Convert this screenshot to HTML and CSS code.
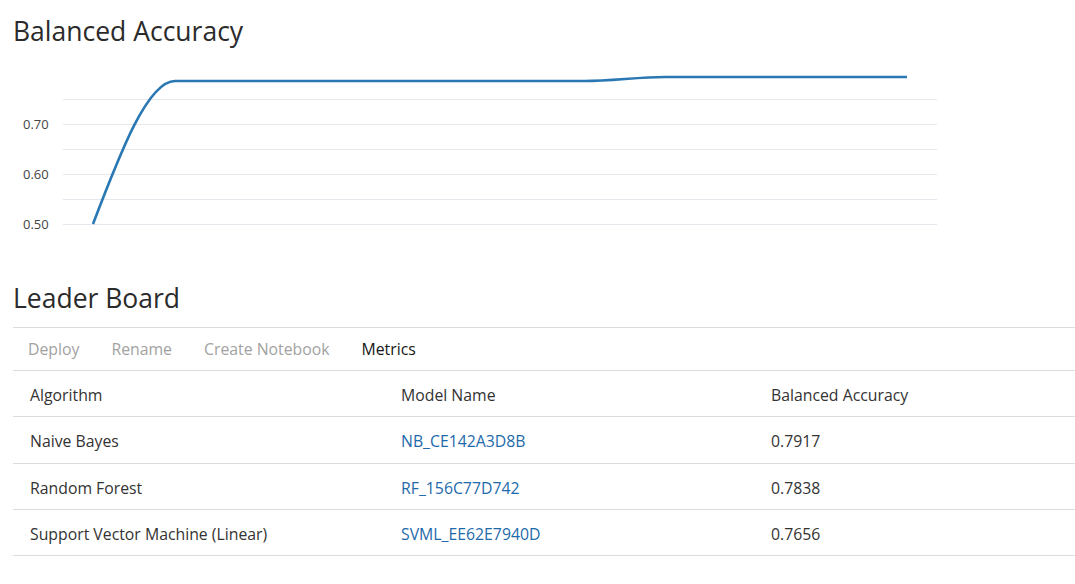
FILE: index.html
```html
<!DOCTYPE html>
<html>
<head>
<meta charset="utf-8">
<link rel="stylesheet" href="styles.css">
</head>
<body>
<h1 class="title">Balanced Accuracy</h1>
<svg class="chart" width="940" height="190" viewBox="0 0 940 190">
  <g class="grid">
    <line x1="50" x2="924" y1="47.5" y2="47.5"/>
    <line x1="50" x2="924" y1="72.5" y2="72.5"/>
    <line x1="50" x2="924" y1="97.5" y2="97.5"/>
    <line x1="50" x2="924" y1="122.5" y2="122.5"/>
    <line x1="50" x2="924" y1="147.5" y2="147.5"/>
    <line x1="50" x2="924" y1="172.5" y2="172.5"/>
  </g>
  <g class="axis">
    <text x="10" y="73.5">0.70</text>
    <text x="10" y="123.5">0.60</text>
    <text x="10" y="173.5">0.50</text>
  </g>
  <path class="series" d="M80,172 C107.3,100.5 134.7,29 162,29 L572,29 C598.7,29 625.3,25 652,25 L894,25"/>
</svg>
<h2 class="title section">Leader Board</h2>
<div class="toolbar">
  <span class="tool disabled">Deploy</span>
  <span class="tool disabled">Rename</span>
  <span class="tool disabled">Create Notebook</span>
  <span class="tool">Metrics</span>
</div>
<div class="table">
  <div class="row head">
    <div class="cell">Algorithm</div>
    <div class="cell">Model Name</div>
    <div class="cell">Balanced Accuracy</div>
  </div>
  <div class="row first">
    <div class="cell">Naive Bayes</div>
    <div class="cell"><a class="link">NB_CE142A3D8B</a></div>
    <div class="cell">0.7917</div>
  </div>
  <div class="row">
    <div class="cell">Random Forest</div>
    <div class="cell"><a class="link">RF_156C77D742</a></div>
    <div class="cell">0.7838</div>
  </div>
  <div class="row">
    <div class="cell">Support Vector Machine (Linear)</div>
    <div class="cell"><a class="link">SVML_EE62E7940D</a></div>
    <div class="cell">0.7656</div>
  </div>
</div>
</body>
</html>
```
FILE: styles.css
```css
html, body {
  margin: 0;
  padding: 0;
  background: #fff;
}
body {
  padding: 0 0 0 13px;
  font-family: "Open Sans", "Noto Sans", sans-serif;
  color: #333;
  overflow: hidden;
}
.title {
  margin: 0;
  font-weight: 400;
  font-size: 26.5px;
  line-height: 42px;
  color: #2b2b2b;
  padding-top: 10px;
}
.chart {
  display: block;
}
.grid line {
  stroke: #e5e8ec;
  stroke-width: 1;
}
.axis text {
  font-family: "Open Sans", "Noto Sans", sans-serif;
  font-size: 13px;
  fill: #444;
  dominant-baseline: middle;
}
.series {
  fill: none;
  stroke: #2a78b3;
  stroke-width: 2.6;
}
.section {
  padding-top: 35px;
  margin-bottom: 8px;
}
.toolbar {
  display: flex;
  gap: 32px;
  padding-left: 15px;
  height: 42px;
  align-items: center;
  border-top: 1px solid #dcdcdc;
  border-bottom: 1px solid #dcdcdc;
  font-size: 15.8px;
}
.tool {
  color: #161616;
}
.tool.disabled {
  color: #a2a2a2;
}
.table {
  font-size: 15.8px;
}
.row {
  display: grid;
  grid-template-columns: 371px 370px 1fr;
  height: 45px;
  align-items: center;
  border-bottom: 1px solid #dcdcdc;
}
.row.first {
  height: 46px;
}
.cell {
  padding-left: 17px;
  padding-top: 2px;
  white-space: nowrap;
}
.link {
  color: #1e6aab;
  text-decoration: none;
}
```
